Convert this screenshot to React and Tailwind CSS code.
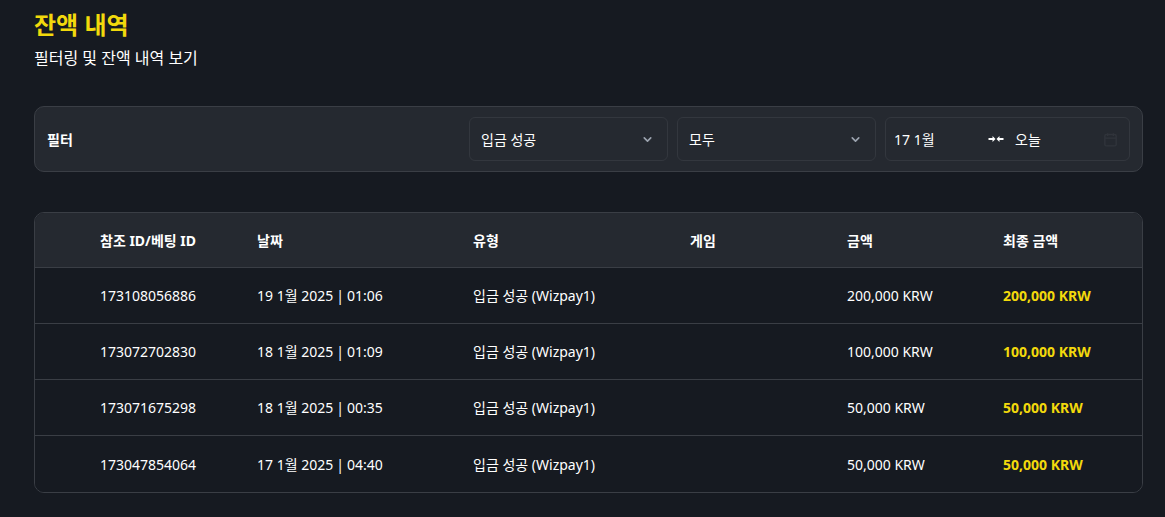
import React from "react";

const rows = [
  ["173108056886", "19 1월 2025", "01:06", "입금 성공 (Wizpay1)", "200,000 KRW"],
  ["173072702830", "18 1월 2025", "01:09", "입금 성공 (Wizpay1)", "100,000 KRW"],
  ["173071675298", "18 1월 2025", "00:35", "입금 성공 (Wizpay1)", "50,000 KRW"],
  ["173047854064", "17 1월 2025", "04:40", "입금 성공 (Wizpay1)", "50,000 KRW"],
];

const Chevron = () => (
  <svg width="13" height="13" viewBox="0 0 24 24" fill="none" stroke="#9ca3af" strokeWidth="3" strokeLinecap="round" strokeLinejoin="round">
    <path d="M6 9l6 6 6-6" />
  </svg>
);

const grid = "grid grid-cols-[65px_157px_216px_217px_157px_156px_1fr] items-center";

export default function App() {
  return (
    <div
      className="min-h-[517px] w-[1165px] bg-[#161a21] text-white pl-[34px] pr-[22px] pt-[8px]"
      style={{ fontFamily: '"Noto Sans", "Noto Sans CJK KR", sans-serif' }}
    >
      <h1 className="text-[24px] font-bold text-[#f2d90c] leading-[34px]">잔액 내역</h1>
      <p className="text-[16px] leading-[22px] mt-[5px]">필터링 및 잔액 내역 보기</p>

      <div className="mt-[37px] h-[66px] rounded-[10px] border border-[#3a3e45] bg-[#252930] flex items-center pl-[12px] pr-[12px]">
        <div className="text-[14px] font-bold">필터</div>
        <div className="ml-auto flex gap-[9px]">
          <div className="w-[199px] h-[44px] rounded-[6px] border border-[#33373e] flex items-center justify-between pl-[11px] pr-[13px] text-[14px]">
            <span>입금 성공</span>
            <Chevron />
          </div>
          <div className="w-[199px] h-[44px] rounded-[6px] border border-[#33373e] flex items-center justify-between pl-[11px] pr-[13px] text-[14px]">
            <span>모두</span>
            <Chevron />
          </div>
          <div className="w-[245px] h-[44px] rounded-[6px] border border-[#33373e] flex items-center pl-[8px] pr-[8px] text-[14px]">
            <span className="w-[94px]">17 1월</span>
            <svg width="16" height="10" viewBox="0 0 16 10" className="mr-[11px]">
              <path d="M0.5 5h5" stroke="white" strokeWidth="2" />
              <path d="M4.5 2L7.5 5 4.5 8z" fill="white" />
              <path d="M15.5 5h-5" stroke="white" strokeWidth="2" />
              <path d="M11.5 2L8.5 5l3 3z" fill="white" />
            </svg>
            <span>오늘</span>
            <svg className="ml-auto mr-[2px]" width="17" height="17" viewBox="0 0 24 24" fill="none" stroke="#30343b" strokeWidth="2">
              <rect x="4" y="5" width="16" height="16" rx="2" />
              <path d="M4 10h16M8 3v4M16 3v4" />
            </svg>
          </div>
        </div>
      </div>

      <div className="mt-[40px] rounded-[10px] border border-[#3a3e45] overflow-hidden">
        <div className={`${grid} h-[55px] bg-[#252930] border-b border-[#3a3e45] text-[14px] font-bold`}>
          <div />
          <div>참조 ID/베팅 ID</div>
          <div>날짜</div>
          <div>유형</div>
          <div>게임</div>
          <div>금액</div>
          <div>최종 금액</div>
        </div>
        {rows.map((r, i) => (
          <div
            key={r[0]}
            className={`${grid} h-[56px] bg-[#161a21] text-[14px] ${i < rows.length - 1 ? "border-b border-[#3a3e45]" : ""}`}
          >
            <div />
            <div>{r[0]}</div>
            <div className="flex items-center">
              <span>{r[1]}</span>
              <span className="mx-[3px]">|</span>
              <span>{r[2]}</span>
            </div>
            <div>{r[3]}</div>
            <div />
            <div>{r[4]}</div>
            <div className="font-bold text-[#f2d90c]">{r[4]}</div>
          </div>
        ))}
      </div>
    </div>
  );
}
